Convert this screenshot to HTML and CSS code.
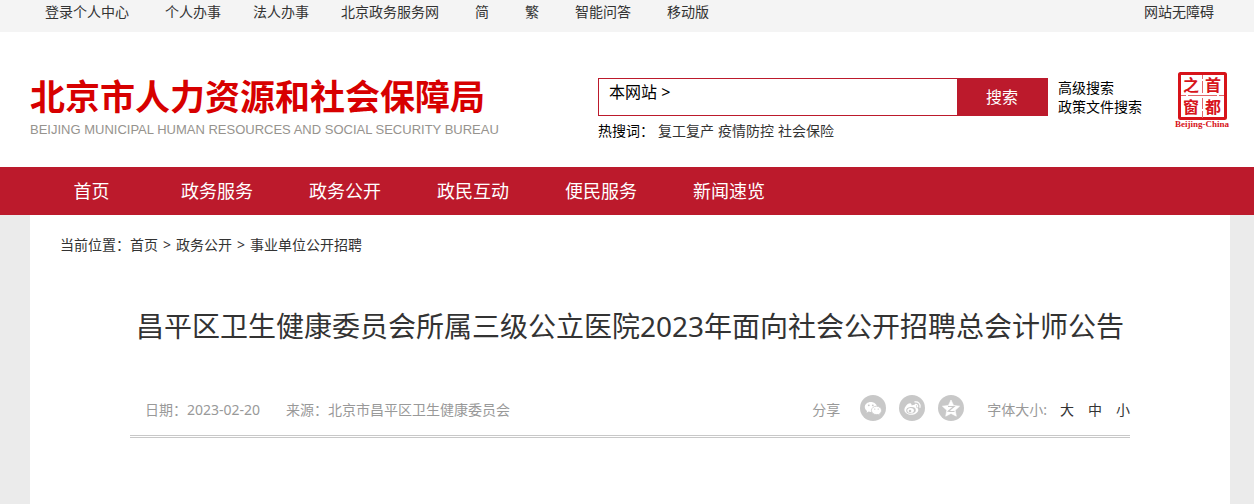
FILE: index.html
```html
<!DOCTYPE html>
<html lang="zh-CN">
<head>
    <meta charset="UTF-8">
    <meta name="viewport" content="width=device-width, initial-scale=1.0">
    <title>昌平区卫生健康委员会所属三级公立医院2023年面向社会公开招聘总会计师公告</title>
    <link rel="stylesheet" href="styles.css">
</head>
<body>
    <!-- 顶部工具栏 -->
    <div class="top-bar">
        <div class="wrap top-inner">
            <div class="top-links">
                <a href="#">登录个人中心</a>
                <div class="top-group">
                    <a href="#">个人办事</a>
                    <a href="#">法人办事</a>
                    <a href="#">北京政务服务网</a>
                </div>
                <a href="#">简</a>
                <a href="#">繁</a>
                <a href="#">智能问答</a>
                <a href="#">移动版</a>
            </div>
            <a href="#">网站无障碍</a>
        </div>
    </div>

    <!-- 页头 -->
    <header class="header">
        <div class="wrap header-inner">
            <a class="logo" href="#">
                <span class="logo-cn">北京市人力资源和社会保障局</span>
                <span class="logo-en">BEIJING MUNICIPAL HUMAN RESOURCES AND SOCIAL SECURITY BUREAU</span>
            </a>
            <div class="search">
                <form class="search-form">
                    <button class="search-scope" type="button">本网站 &gt;</button>
                    <input class="search-input" type="text" aria-label="搜索内容">
                    <button class="search-btn" type="submit">搜索</button>
                </form>
                <div class="hot-words">
                    <span class="hot-label">热搜词：</span>
                    <a href="#">复工复产</a>
                    <a href="#">疫情防控</a>
                    <a href="#">社会保险</a>
                </div>
            </div>
            <div class="search-more">
                <a href="#">高级搜索</a>
                <a href="#">政策文件搜索</a>
            </div>
            <a class="seal" href="#">
                <svg width="56" height="58" viewBox="0 0 56 58">
                    <rect x="5.500" y="1.500" width="46" height="45" rx="1" fill="none" stroke="#d7141a" stroke-width="3"/>
                    <path d="M28.500 3v4M28.500 9v12M28.500 26v11M28.500 39v7M7 23.500h5M14 23.500h29M45 23.500h5" stroke="#e2686c" stroke-width="1"/>
                    <g class="seal-text">
                        <text x="17" y="19">之</text>
                        <text x="39" y="19">首</text>
                        <text x="17" y="41">窗</text>
                        <text x="39" y="41">都</text>
                    </g>
                    <text class="seal-en" x="28" y="55">Beijing-China</text>
                </svg>
            </a>
        </div>
    </header>

    <!-- 主导航 -->
    <nav class="nav">
        <div class="wrap nav-inner">
            <a class="nav-home" href="#">首页</a>
            <a href="#">政务服务</a>
            <a href="#">政务公开</a>
            <a href="#">政民互动</a>
            <a href="#">便民服务</a>
            <a href="#">新闻速览</a>
        </div>
    </nav>

    <!-- 正文 -->
    <div class="wrap main-wrap">
        <main class="main">
            <div class="crumbs">当前位置：<a href="#">首页</a><span class="sep">&gt;</span><a href="#">政务公开</a><span class="sep">&gt;</span><a href="#">事业单位公开招聘</a></div>
            <article class="article">
                <h1>昌平区卫生健康委员会所属三级公立医院2023年面向社会公开招聘总会计师公告</h1>
                <div class="meta">
                    <div class="meta-info">
                        <span>日期：2023-02-20</span>
                        <span>来源：北京市昌平区卫生健康委员会</span>
                    </div>
                    <div class="meta-tools">
                        <span>分享</span>
                        <div class="share">
                            <a href="#" aria-label="微信">
                                <svg width="26" height="26" viewBox="0 0 26 26">
                                    <circle cx="13" cy="13" r="13" fill="#c8c8c8"/>
                                    <path d="M10.800 7C7.400 7 4.800 9.200 4.800 12c0 1.600.9 3 2.300 3.900l-.6 1.900 2.200-1.200c.7.2 1.400.3 2.100.3C14 16.900 17 14.800 17 12S14 7 10.800 7z" fill="#fff"/>
                                    <path d="M16.500 11.200c-2.900 0-5.100 1.900-5.100 4.200s2.200 4.200 5.100 4.200c.6 0 1.200-.1 1.700-.2l1.800 1-.5-1.600c1.200-.8 2-2 2-3.400 0-2.300-2.200-4.200-5-4.200z" fill="#fff" stroke="#c8c8c8" stroke-width=".8"/>
                                    <g fill="#c8c8c8">
                                        <circle cx="8.800" cy="10.300" r=".9"/>
                                        <circle cx="12.800" cy="10.300" r=".9"/>
                                        <circle cx="14.800" cy="14.100" r=".7"/>
                                        <circle cx="18.200" cy="14.100" r=".7"/>
                                    </g>
                                </svg>
                            </a>
                            <a href="#" aria-label="微博">
                                <svg width="26" height="26" viewBox="0 0 26 26">
                                    <circle cx="13" cy="13" r="13" fill="#c8c8c8"/>
                                    <path d="M12 8.700c-1-1-3.200.1-4.700 1.800C6 12 5.200 13.700 5.400 15.300c.3 2.700 3.400 4.500 6.700 4.500 4.100 0 7.200-2.500 7.200-4.900 0-1.300-1-2.100-2.100-2.400.4-1 .4-1.800-.2-2.300-.9-.8-2.700-.4-4.400.3.1-.6 0-1.300-.6-1.800z" fill="#fff"/>
                                    <ellipse cx="12" cy="15.300" rx="4.800" ry="3.300" transform="rotate(-8 12 15.300)" fill="#c8c8c8"/>
                                    <ellipse cx="11.600" cy="15.600" rx="3.300" ry="2.500" fill="#fff"/>
                                    <circle cx="11" cy="16" r="1.300" fill="#c8c8c8"/>
                                    <path d="M16.300 9.400c1.500-.3 2.700.9 2.300 2.500M15.900 6.900c3.200-.7 5.900 2 5.100 5.400" fill="none" stroke="#fff" stroke-width="1.200" stroke-linecap="round"/>
                                </svg>
                            </a>
                            <a href="#" aria-label="QQ空间">
                                <svg width="26" height="26" viewBox="0 0 26 26">
                                    <circle cx="13" cy="13" r="13" fill="#c8c8c8"/>
                                    <path d="M13 5l2.600 5.400 6 .8-4.400 4.100 1.100 5.900-5.300-2.800-5.300 2.800 1.100-5.900-4.400-4.100 6-.8z" fill="#fff" stroke="#fff" stroke-width=".6" stroke-linejoin="round"/>
                                    <path d="M10 11.500h6l-5.700 4.700c2 .4 4 .4 6.200.1" fill="none" stroke="#c8c8c8" stroke-width="1.200"/>
                                </svg>
                            </a>
                        </div>
                        <span class="size-label">字体大小:</span>
                        <div class="font-size">
                            <button type="button">大</button>
                            <button type="button">中</button>
                            <button type="button">小</button>
                        </div>
                    </div>
                </div>
            </article>
        </main>
    </div>
</body>
</html>
```
FILE: styles.css
```css
* {
    margin: 0;
    padding: 0;
    box-sizing: border-box;
}

body {
    display: flex;
    flex-direction: column;
    min-height: 100vh;
    font-family: "Noto Sans", "Noto Sans CJK SC", sans-serif;
    font-size: 14px;
    line-height: 24px;
    color: #333;
    background: #ebebeb;
}

a {
    color: inherit;
    text-decoration: none;
}

button,
input {
    font: inherit;
    color: inherit;
    background: none;
    border: 0;
}

button {
    cursor: pointer;
}

.wrap {
    width: 100%;
    padding: 0 24px 0 30px;
}

/* 顶部工具栏 */
.top-bar {
    height: 32px;
    background: #f4f4f4;
}

.top-inner {
    display: flex;
    justify-content: space-between;
    padding-left: 45px;
    padding-right: 40px;
}

.top-links {
    display: flex;
    gap: 36px;
}

.top-group {
    display: flex;
    gap: 32px;
}

/* 页头 */
.header {
    background: #fff;
}

.header-inner {
    display: flex;
    align-items: flex-start;
    height: 135px;
    padding-top: 40px;
}

.logo {
    flex: 1;
    display: flex;
    flex-direction: column;
    padding-top: 4px;
    white-space: nowrap;
}

.logo-cn {
    font-size: 35px;
    line-height: 42px;
    font-weight: 700;
    color: #d70000;
}

.logo-en {
    font-family: "Liberation Sans", Arial, sans-serif;
    font-size: 13px;
    line-height: 24px;
    color: #96938e;
}

.search {
    width: 450px;
    padding-top: 6px;
}

.search-form {
    display: flex;
    height: 38px;
    border: 1px solid #bc1a2c;
    font-size: 16px;
    color: #000;
}

.search-scope {
    align-self: flex-start;
    padding: 1px 10px;
}

.search-input {
    flex: 1;
    min-width: 0;
    outline: none;
}

.search-btn {
    width: 90px;
    color: #fff;
    background: #bc1a2c;
}

.hot-words {
    display: flex;
    gap: 4px;
    padding-top: 3px;
}

.hot-label {
    color: #000;
}

.search-more {
    display: flex;
    flex-direction: column;
    width: 126px;
    padding: 6px 0 0 10px;
    line-height: 19px;
    color: #000;
}

.seal svg {
    display: block;
}

.seal-text {
    font-size: 16px;
    font-weight: 700;
    fill: #d7141a;
    text-anchor: middle;
}

.seal-en {
    font-family: "Liberation Serif", serif;
    font-size: 9px;
    font-weight: 700;
    fill: #d7141a;
    text-anchor: middle;
}

/* 主导航 */
.nav {
    background: #bc1a2c;
}

.nav-inner {
    display: flex;
    font-size: 18px;
    line-height: 48px;
    color: #fff;
}

.nav a {
    width: 128px;
    text-align: center;
}

.nav .nav-home {
    width: 123px;
}

/* 正文 */
.main-wrap {
    flex: 1;
    display: flex;
}

.main {
    flex: 1;
    padding: 18px 30px;
    background: #fff;
}

.crumbs .sep {
    padding: 0 5px;
}

.article {
    max-width: 1000px;
    margin: 0 auto;
    padding-top: 48px;
}

.article h1 {
    font-size: 28px;
    line-height: 42px;
    font-weight: 400;
    text-align: center;
}

.meta {
    display: flex;
    justify-content: space-between;
    align-items: flex-end;
    margin-top: 48px;
    padding: 0 0 14px 15px;
    border-bottom: 3px double #c8c8c8;
    line-height: 22px;
    color: #999;
}

.meta-info {
    display: flex;
    gap: 26px;
}

.meta-tools {
    display: flex;
    align-items: flex-end;
}

.share {
    display: flex;
    gap: 13px;
    margin: 0 23px 0 20px;
}

.share a,
.share svg {
    display: block;
}

.font-size {
    display: flex;
    gap: 14px;
    margin-left: 13px;
    color: #333;
}
```
